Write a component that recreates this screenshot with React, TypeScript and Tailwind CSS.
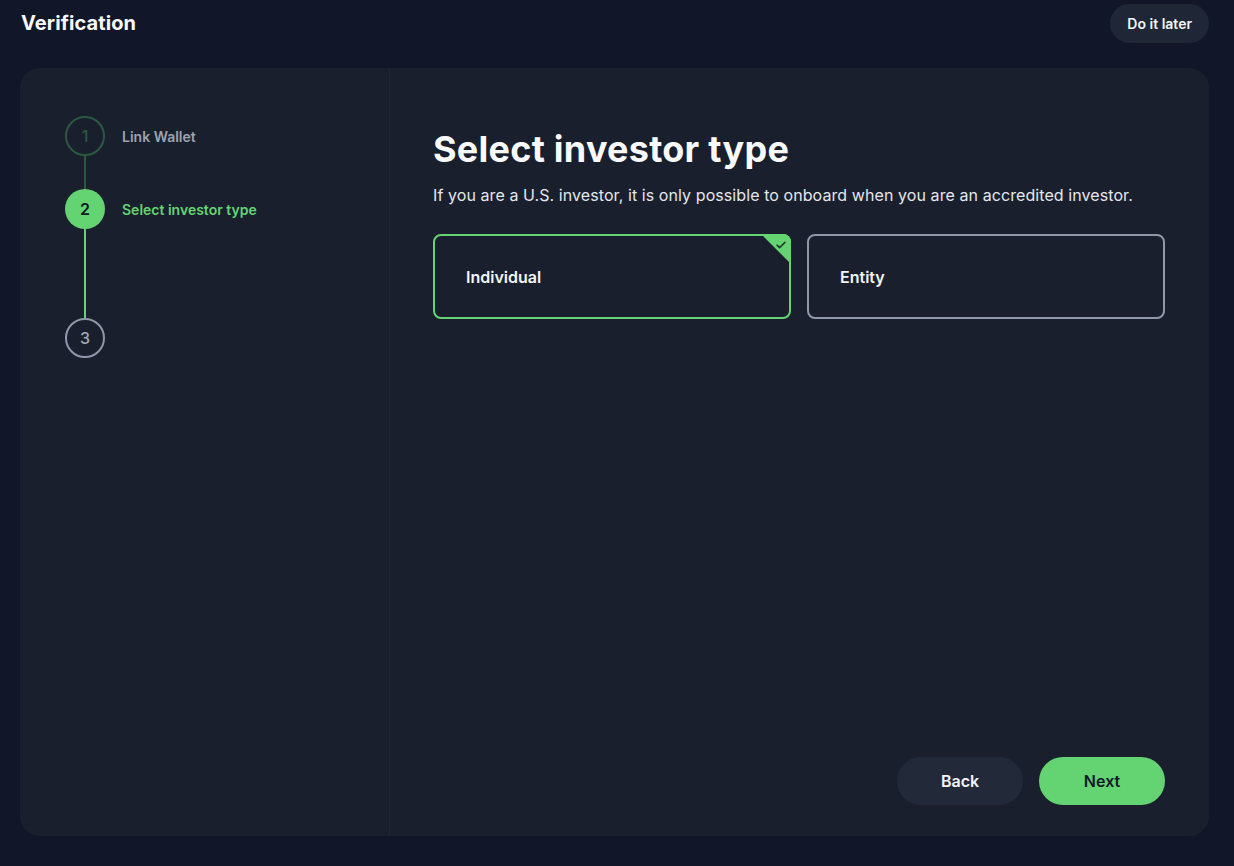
import { type ReactElement, useState } from 'react';

type Step = { n: number; label?: string; state: 'done' | 'active' | 'todo' };

const steps: Step[] = [
  { n: 1, label: 'Link Wallet', state: 'done' },
  { n: 2, label: 'Select investor type', state: 'active' },
  { n: 3, state: 'todo' },
];

function StepCircle({ step }: { step: Step }): ReactElement {
  if (step.state === 'active') {
    return (
      <div className="w-10 h-10 rounded-full bg-[#63d471] text-[#111827] flex items-center justify-center text-[16px] font-semibold">
        {step.n}
      </div>
    );
  }
  if (step.state === 'done') {
    return (
      <div className="w-10 h-10 rounded-full border-2 border-[#2a5a3e] text-[#2a5a3e] flex items-center justify-center text-[16px] font-medium">
        {step.n}
      </div>
    );
  }
  return (
    <div className="w-10 h-10 rounded-full border-2 border-[#8f98a8] text-[#a3abb9] flex items-center justify-center text-[16px] font-medium">
      {step.n}
    </div>
  );
}

function Stepper(): ReactElement {
  return (
    <div className="flex flex-col pl-[45px] pt-12">
      <div className="flex items-center gap-[17px]">
        <StepCircle step={steps[0]} />
        <span className="pt-px text-sm font-semibold text-[#9ca3af]">{steps[0].label}</span>
      </div>
      <div className="ml-[19px] w-[2px] h-[33px] bg-[#2a5a3e]" />
      <div className="flex items-center gap-[17px]">
        <StepCircle step={steps[1]} />
        <span className="pt-px text-sm font-semibold text-[#63d471]">{steps[1].label}</span>
      </div>
      <div className="ml-[19px] w-[2px] h-[89px] bg-[#63d471]" />
      <div className="flex items-center gap-[17px]">
        <StepCircle step={steps[2]} />
      </div>
    </div>
  );
}

function TypeCard({
  label,
  selected,
  onClick,
}: {
  label: string;
  selected: boolean;
  onClick: () => void;
}): ReactElement {
  return (
    <button
      type="button"
      onClick={onClick}
      className={
        selected
          ? 'relative h-[85px] rounded-lg border-2 border-[#63d471] pl-[31px] pr-8 pt-px text-left text-[16px] font-semibold text-[#f3f4f6]'
          : 'relative h-[85px] rounded-lg border-2 border-[#8f98a8] pl-[31px] pr-8 pt-px text-left text-[16px] font-semibold text-[#f3f4f6]'
      }
    >
      {label}
      {selected && (
        <span className="absolute -top-[2px] -right-[2px] w-[30px] h-[30px] rounded-tr-lg bg-[#63d471] [clip-path:polygon(0_0,100%_0,100%_100%)]">
          <svg
            viewBox="0 0 12 12"
            className="absolute top-[5px] right-[4px] w-[12px] h-[12px]"
            fill="none"
            stroke="#1f3b2a"
            strokeWidth="1.6"
            strokeLinecap="round"
            strokeLinejoin="round"
          >
            <path d="M2 6.2 4.6 8.6 10 3.4" />
          </svg>
        </span>
      )}
    </button>
  );
}

export default function App(): ReactElement {
  const [type, setType] = useState<'individual' | 'entity'>('individual');

  return (
    <div className="min-h-[866px] bg-[#111728] pl-5 pr-[25px] pb-[30px] font-['Inter',sans-serif] text-white">
      <header className="flex h-[47px] items-center justify-between">
        <h1 className="pl-px pb-0.5 text-[20px] font-bold tracking-[0.1px] text-[#f9fafb]">Verification</h1>
        <button
          type="button"
          className="h-[39px] rounded-full bg-[#1f2737] px-[17px] text-sm font-semibold text-[#f3f4f6]"
        >
          Do it later
        </button>
      </header>

      <main className="mt-[21px] grid h-[768px] grid-cols-[369px_1px_1fr] rounded-[20px] bg-[#1a1f2e]">
        <aside>
          <Stepper />
        </aside>
        <div className="bg-[#1f2636]" />
        <section className="flex flex-col pl-[43px] pr-[44px] pt-[61px] pb-[31px]">
          <h2 className="text-[36px] leading-10 font-bold tracking-[0.25px] text-[#f9fafb]">
            Select investor type
          </h2>
          <p className="mt-[14px] text-[16px] leading-6 tracking-[0.08px] text-[#e5e7eb]">
            If you are a U.S. investor, it is only possible to onboard when you are an accredited investor.
          </p>
          <div className="mt-[27px] grid grid-cols-2 gap-4">
            <TypeCard
              label="Individual"
              selected={type === 'individual'}
              onClick={() => setType('individual')}
            />
            <TypeCard label="Entity" selected={type === 'entity'} onClick={() => setType('entity')} />
          </div>
          <div className="mt-auto flex justify-end gap-4">
            <button
              type="button"
              className="h-12 w-[126px] rounded-full bg-[#222a3a] text-[16px] font-semibold text-[#f3f4f6]"
            >
              Back
            </button>
            <button
              type="button"
              className="h-12 w-[126px] rounded-full bg-[#63d471] text-[16px] font-semibold text-[#111827]"
            >
              Next
            </button>
          </div>
        </section>
      </main>
    </div>
  );
}
